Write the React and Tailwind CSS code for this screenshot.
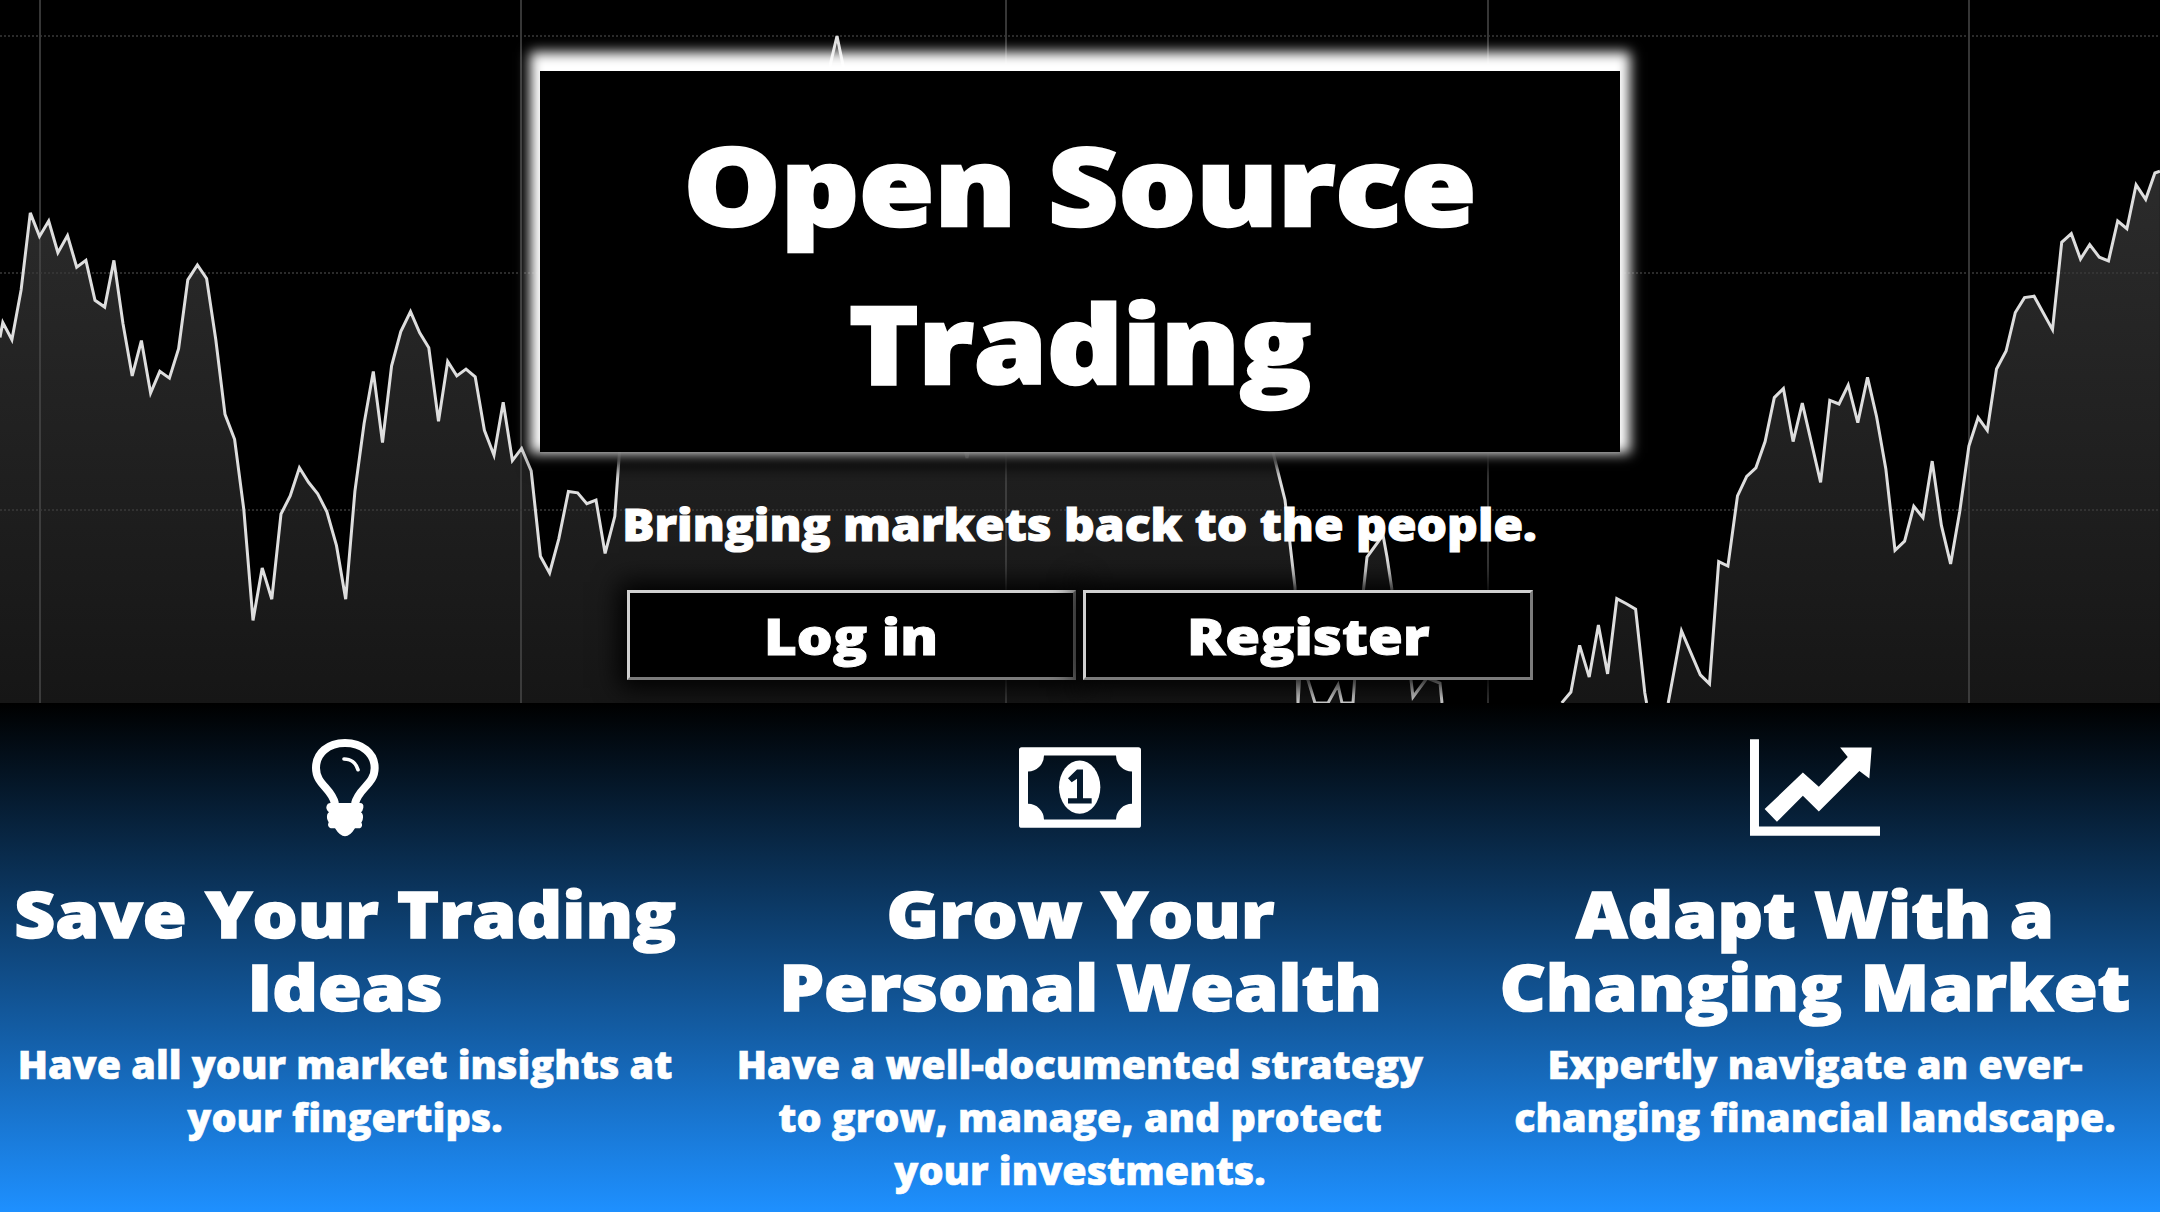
const L = [[0,745],[6,712],[26,750],[46,640],[66,470],[86,522],[106,488],[126,558],[147,520],[167,590],[187,575],[207,663],[228,678],[248,575],[268,715],[288,830],[308,752],[328,868],[348,820],[369,835],[389,770],[409,618],[430,585],[450,615],[470,750],[490,915],[511,970],[531,1125],[551,1370],[571,1254],[592,1323],[612,1135],[632,1095],[652,1033],[672,1065],[692,1090],[712,1130],[733,1205],[753,1323],[773,1085],[793,935],[813,820],[833,977],[853,808],[873,732],[894,688],[914,735],[934,768],[955,930],[975,798],[995,830],[1015,815],[1035,832],[1055,950],[1076,1005],[1096,888],[1116,1017],[1136,990],[1157,1040],[1177,1228],[1197,1265],[1217,1190],[1238,1085],[1258,1088],[1278,1112],[1298,1104],[1318,1222],[1339,1140],[1349,1000]].map(([x,y])=>[x/2.178,y/2.208]);
const M = [[625,420],[634,350],[643,300],[652,340],[662,280],[671,230],[680,270],[690,210],[699,260],[708,180],[717,230],[727,160],[736,210],[745,150],[754,190],[764,130],[773,170],[782,120],[792,160],[801,100],[810,140],[819,90],[829,70],[837,36],[846,80],[856,110],[865,150],[874,130],[884,190],[893,170],[902,230],[912,210],[921,270],[930,300],[940,350],[949,400],[958,420],[967,458],[977,410],[986,370],[995,390],[1005,330],[1014,360],[1023,300],[1032,320],[1042,270],[1051,290],[1060,250],[1070,280],[1079,240],[1088,270],[1098,230],[1107,260],[1116,220],[1126,250],[1135,210],[1144,240],[1154,200],[1163,230],[1172,260],[1182,220],[1191,250],[1200,280],[1210,320],[1219,300],[1228,350],[1238,330],[1247,380],[1256,360],[1265,410],[1273,452],[1285,500],[1295,587],[1298,703]];
const G = [[1298,703],[1300,672],[1308,680],[1315,703],[1328,703],[1338,685],[1342,703],[1353,703],[1356,660],[1367,557],[1383,535],[1387,557],[1392,590],[1405,650],[1411,680],[1413,697],[1427,678],[1440,683],[1442,703]];
const R = [[265,1552],[285,1528],[304,1425],[325,1495],[345,1380],[365,1488],[385,1322],[406,1333],[426,1345],[446,1530],[450,1552]].map(([x,y])=>[1440+x/2.178,y/2.208]);
const R2 = [[497,1552],[526,1393],[567,1490],[587,1510],[607,1240],[627,1250],[648,1095],[668,1052],[688,1033],[708,975],[728,878],[748,858],[769,975],[789,890],[829,1065],[849,884],[869,892],[889,850],[910,933],[931,833],[951,920],[971,1035],[991,1215],[1012,1195],[1032,1118],[1052,1143],[1072,1018],[1092,1160],[1112,1245],[1132,1130],[1152,985],[1172,922],[1192,950],[1212,815],[1233,775],[1253,690],[1273,657],[1294,654],[1334,728],[1354,535],[1375,516],[1395,572],[1415,540],[1436,568],[1456,576],[1476,488],[1496,505],[1516,408],[1537,440],[1557,382],[1568,378]].map(([x,y])=>[1440+x/2.178,y/2.208]);
const segs = [[...L, ...M, ...G], R, R2];
const toS = (p) => p.map(([x, y]) => `${x.toFixed(1)},${y.toFixed(1)}`).join(" ");

function Chart() {
  return (
    <svg className="absolute inset-0 w-full h-full" viewBox="0 0 2160 703" preserveAspectRatio="none">
      <defs>
        <linearGradient id="fill" gradientUnits="userSpaceOnUse" x1="0" y1="150" x2="0" y2="703">
          <stop offset="0" stopColor="#2c2c2c" />
          <stop offset="1" stopColor="#161616" />
        </linearGradient>
      </defs>
      {segs.map((s, i) => (
        <polygon key={i} points={`${toS(s)} ${s[s.length - 1][0]},703 ${s[0][0]},703`} fill="url(#fill)" />
      ))}
      {[40, 521, 1006, 1488, 1969].map((x) => (
        <line key={x} x1={x} x2={x} y1="0" y2="703" stroke="#484848" strokeWidth="1.5" />
      ))}
      {[36, 273, 510].map((y) => (
        <line key={y} x1="0" x2="2160" y1={y} y2={y} stroke="#3a3a3a" strokeWidth="1.5" strokeDasharray="2 2" />
      ))}
      {segs.map((s, i) => (
        <polyline key={i} points={toS(s)} fill="none" stroke="#dedede" strokeWidth="3" strokeLinejoin="miter" />
      ))}
    </svg>
  );
}

function Bulb() {
  return (
    <svg width="70" height="100" viewBox="0 0 210 300" className="block">
      <g transform="translate(-90,-52)">
        <path d="M165 252 C155 205 108 195 108 145 C108 100 145 70 195 70 C245 70 284 100 284 145 C284 195 235 205 225 252" fill="none" stroke="#fff" strokeWidth="24" />
        <path d="M192 118 C212 118 228 130 234 150" fill="none" stroke="#fff" strokeWidth="11" strokeLinecap="round" />
        <path d="M150 250 H240 Q252 250 250 264 Q248 274 243 278 Q252 285 248 300 Q246 306 244 308 Q250 320 240 326 H225 Q210 350 195 350 Q180 350 165 326 H152 Q140 320 146 308 Q138 296 142 284 Q144 280 147 278 Q136 268 140 258 Q142 250 150 250Z" fill="#fff" />
      </g>
    </svg>
  );
}

function Bill() {
  return (
    <svg width="122" height="81" viewBox="58 55 366 242" className="block">
      <path fillRule="evenodd" fill="#fff" d="M66 55 H416 Q424 55 424 63 V289 Q424 297 416 297 H66 Q58 297 58 289 V63 Q58 55 66 55Z M133 80 A48 48 0 0 1 85 128 V225 A48 48 0 0 1 133 272 H349 A48 48 0 0 1 397 225 V128 A48 48 0 0 1 349 80Z" />
      <ellipse cx="240" cy="175" rx="62" ry="80" fill="#fff" />
      <path fill="#051a2e" d="M205 148 L232 122 H250 V208 H276 V224 H205 V208 H232 V150 L216 160Z" />
    </svg>
  );
}

function Trend() {
  return (
    <svg width="130" height="97" viewBox="61 45 391 290" className="block">
      <path fill="#fff" d="M61 45 H88 V307 H452 V335 H61Z" />
      <path fill="#fff" d="M105 255 L142 293 L220 215 L268 262 L390 140 L420 163 L427 70 L332 70 L355 98 L268 188 L220 145Z" />
    </svg>
  );
}

const font = "font-['Open_Sans',sans-serif] font-extrabold";

function Feature({ icon, title, lines }) {
  return (
    <div className="w-[735px] shrink-0 flex flex-col items-center text-center text-white">
      <div className="h-[100px] flex items-center justify-center">{icon}</div>
      <h2 className="mt-[40px] text-[64px] leading-[73px] scale-x-[1.11] [-webkit-text-stroke:1.5px_white]">
        {title.map((t) => <div key={t}>{t}</div>)}
      </h2>
      <p className="mt-[15px] text-[39.5px] leading-[53px] [-webkit-text-stroke:0.6px_white]">
        {lines.map((t) => <span key={t} className="block">{t}</span>)}
      </p>
    </div>
  );
}

const btn = "h-[90px] pt-[3px] bg-black text-white text-[50px] border-[3px] [border-style:outset] border-[#d0d0d0] shadow-[0_0_24px_8px_#000]";

export default function App() {
  return (
    <div className={`w-[2160px] h-[1212px] overflow-hidden bg-black ${font}`}>
      <section className="relative h-[703px] overflow-hidden flex flex-col items-center">
        <Chart />
        <div className="relative mt-[71px] w-[1080px] h-[381px] pt-[5px] bg-black shadow-[0_-9px_12px_10px_#fff,0_8px_16px_6px_#000] flex flex-col items-center justify-center text-white text-[108px] leading-[158px]">
          <div className="scale-x-[1.13] [-webkit-text-stroke:2.5px_white]">Open Source</div>
          <div className="scale-x-[1.09] [-webkit-text-stroke:2.5px_white]">Trading</div>
        </div>
        <p className="relative mt-[42px] text-white text-[44px] leading-[60px] scale-x-[1.09] [-webkit-text-stroke:1px_white]">Bringing markets back to the people.</p>
        <div className="relative mt-[36px] flex gap-[7px]">
          <button className={`w-[449px] ${btn}`}><span className="inline-block scale-x-[1.13] [-webkit-text-stroke:1px_white]">Log in</span></button>
          <button className={`w-[450px] ${btn}`}><span className="inline-block scale-x-[1.13] [-webkit-text-stroke:1px_white]">Register</span></button>
        </div>
      </section>
      <section className="h-[509px] pt-[34px] flex justify-center bg-[linear-gradient(#000000,#1e90ff)]">
        <Feature icon={<Bulb />} title={["Save Your Trading", "Ideas"]} lines={["Have all your market insights at", "your fingertips."]} />
        <Feature icon={<Bill />} title={["Grow Your", "Personal Wealth"]} lines={["Have a well-documented strategy", "to grow, manage, and protect", "your investments."]} />
        <Feature icon={<Trend />} title={["Adapt With a", "Changing Market"]} lines={["Expertly navigate an ever-", "changing financial landscape."]} />
      </section>
    </div>
  );
}
